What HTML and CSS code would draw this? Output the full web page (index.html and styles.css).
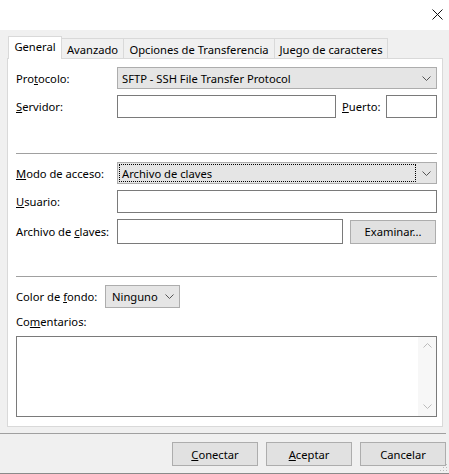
FILE: index.html
```html
<!DOCTYPE html>
<html lang="es">
<head>
<meta charset="utf-8">
<title>Sitio</title>
<link rel="stylesheet" href="styles.css">
</head>
<body>
<div class="window">
  <div class="titlebar">
    <span class="close"><svg width="11" height="11" viewBox="0 0 11 11"><path d="M0.5 0.5 L10.5 10.5 M10.5 0.5 L0.5 10.5" stroke="#111" stroke-width="1" fill="none"/></svg></span>
  </div>
  <div class="tabs">
    <div class="tab tab-general active">General</div>
    <div class="tab tab-avanzado">Avanzado</div>
    <div class="tab tab-opciones">Opciones de Transferencia</div>
    <div class="tab tab-juego">Juego de caracteres</div>
  </div>
  <div class="panel">
    <div class="row row-proto">
      <span class="lbl">Pro<u>t</u>ocolo:</span>
      <div class="combo grow">
        <span class="val">SFTP - SSH File Transfer Protocol</span>
        <svg class="chev" width="9" height="5" viewBox="0 0 9 5"><polyline points="0.5,0.5 4.5,4.5 8.5,0.5" stroke="#555" stroke-width="1" fill="none"/></svg>
      </div>
    </div>
    <div class="row row-server">
      <span class="lbl"><u>S</u>ervidor:</span>
      <div class="input grow"></div>
      <span class="lbl-port"><u>P</u>uerto:</span>
      <div class="input port"></div>
    </div>
    <div class="sep sep-1"></div>
    <div class="row row-modo">
      <span class="lbl"><u>M</u>odo de acceso:</span>
      <div class="combo grow">
        <span class="val focus">Archivo de claves</span>
        <svg class="chev" width="9" height="5" viewBox="0 0 9 5"><polyline points="0.5,0.5 4.5,4.5 8.5,0.5" stroke="#555" stroke-width="1" fill="none"/></svg>
      </div>
    </div>
    <div class="row row-user">
      <span class="lbl"><u>U</u>suario:</span>
      <div class="input grow"></div>
    </div>
    <div class="row row-key">
      <span class="lbl">Archivo de <u>c</u>laves:</span>
      <div class="input grow"></div>
      <div class="btn btn-browse">Examinar...</div>
    </div>
    <div class="sep sep-2"></div>
    <div class="row row-color">
      <span class="lbl lbl-color">Color de <u>f</u>ondo:</span>
      <div class="combo combo-color">
        <span class="val">Ninguno</span>
        <svg class="chev" width="9" height="5" viewBox="0 0 9 5"><polyline points="0.5,0.5 4.5,4.5 8.5,0.5" stroke="#555" stroke-width="1" fill="none"/></svg>
      </div>
    </div>
    <div class="lbl-comments">Co<u>m</u>entarios:</div>
    <div class="textarea">
      <div class="text-body"></div>
      <div class="vscroll">
        <svg width="9" height="5" viewBox="0 0 9 5"><polyline points="0.5,4.5 4.5,0.5 8.5,4.5" stroke="#bbb" stroke-width="1" fill="none"/></svg>
        <svg width="9" height="5" viewBox="0 0 9 5"><polyline points="0.5,0.5 4.5,4.5 8.5,0.5" stroke="#bbb" stroke-width="1" fill="none"/></svg>
      </div>
    </div>
  </div>
  <div class="footer-sep"></div>
  <div class="footer">
    <div class="btn"><u>C</u>onectar</div>
    <div class="btn"><u>A</u>ceptar</div>
    <div class="btn">Cancelar</div>
  </div>
  <svg class="grip" width="8" height="8" viewBox="0 0 8 8">
    <rect x="6" y="0" width="1" height="1" fill="#bbb"/>
    <rect x="3" y="3" width="1" height="1" fill="#bbb"/>
    <rect x="6" y="3" width="1" height="1" fill="#bbb"/>
    <rect x="0" y="6" width="1" height="1" fill="#bbb"/>
    <rect x="3" y="6" width="1" height="1" fill="#bbb"/>
    <rect x="6" y="6" width="1" height="1" fill="#bbb"/>
  </svg>
</div>
</body>
</html>
```

FILE: styles.css
```css
* { box-sizing: border-box; }

html, body {
  margin: 0;
  padding: 0;
}

body {
  font-family: "Noto Sans", "Segoe UI", "Liberation Sans", sans-serif;
  font-size: 11.2px;
  color: #000;
  background: #f0f0f0;
}

u { text-decoration: underline; text-underline-offset: 1px; }

.window {
  position: relative;
  width: 449px;
  height: 474px;
  display: flex;
  flex-direction: column;
  background: #f0f0f0;
  border-bottom: 1px solid #8a8a8a;
}

.titlebar {
  height: 30px;
  background: #fff;
  display: flex;
  justify-content: flex-end;
  align-items: flex-start;
  padding: 9px 6px 0 0;
}

.close { display: block; width: 11px; height: 11px; }
.close svg { display: block; }

/* tabs */
.tabs {
  height: 28px;
  display: flex;
  align-items: flex-end;
  padding-left: 8px;
}

.tab {
  height: 20px;
  border: 1px solid #d9d9d9;
  border-bottom: none;
  margin-left: -1px;
  display: flex;
  align-items: center;
  justify-content: center;
  white-space: nowrap;
  padding-top: 1px;
  background: #f0f0f0;
}

.tab.active {
  position: relative;
  z-index: 1;
  height: 23px;
  margin-bottom: -1px;
  margin-left: 0;
  background: #fff;
  padding-top: 0;
  padding-bottom: 3px;
}

.tab-general { width: 54px; }
.tab-avanzado { width: 63px; }
.tab-opciones { width: 152px; }
.tab-juego { width: 114px; }

/* panel */
.panel {
  margin: 0 6px 0 7px;
  height: 369px;
  background: #fff;
  border: 1px solid #d9d9d9;
  padding: 8px 5px 0 8px;
  display: flex;
  flex-direction: column;
}

.row {
  display: flex;
  align-items: center;
}

.lbl {
  width: 101px;
  flex: none;
  white-space: nowrap;
}

.lbl-color { width: 89px; }

.grow { flex: 1; min-width: 0; }

.combo {
  height: 22px;
  background: #e5e5e5;
  border: 1px solid #adadad;
  display: flex;
  align-items: center;
}

.combo .val {
  flex: 1;
  height: 18px;
  margin: 1px 0 1px 1px;
  padding-left: 2px;
  display: flex;
  align-items: center;
  border: 1px dotted transparent;
  white-space: nowrap;
}

.combo .val.focus { border-color: #000; }

.combo .chev {
  flex: none;
  margin: 0 5px 0 6px;
}

.combo-color {
  width: 75px;
  height: 23px;
}

.combo-color .val { padding-left: 4px; }

.input {
  height: 23px;
  background: #fff;
  border: 1px solid #7a7a7a;
}

.lbl-port {
  width: 44px;
  margin-left: 6px;
  flex: none;
  white-space: nowrap;
}

.input.port { width: 51px; flex: none; }

.row-proto { height: 22px; }
.row-server { margin-top: 6px; }
.sep {
  height: 1px;
  background: #a0a0a0;
}
.sep-1 { margin-top: 35px; }
.row-modo { margin-top: 8px; }
.row-user { margin-top: 6px; }
.row-key { margin-top: 6px; }
.row-key .input { height: 25px; }

.btn {
  height: 24px;
  width: 86px;
  flex: none;
  background: #e1e1e1;
  border: 1px solid #adadad;
  display: flex;
  align-items: center;
  justify-content: center;
  white-space: nowrap;
}

.btn-browse { margin-left: 7px; margin-right: 1px; }

.sep-2 { margin-top: 32px; }
.row-color { margin-top: 8px; }

.lbl-comments {
  margin-top: 6px;
  height: 16px;
  line-height: 16px;
}

.textarea {
  margin-top: 6px;
  height: 81px;
  border: 1px solid #7a7a7a;
  background: #fff;
  display: flex;
}

.text-body { flex: 1; }

.vscroll {
  width: 18px;
  background: #f7f7f7;
  display: flex;
  flex-direction: column;
  justify-content: space-between;
  align-items: center;
  padding: 6px 0 7px;
}
.vscroll svg { display: block; }

/* footer */
.footer-sep {
  margin-top: 6px;
  height: 1px;
  background: #a0a0a0;
  margin-right: 3px;
}

.footer {
  margin-top: 8px;
  display: flex;
  justify-content: flex-end;
  gap: 8px;
  padding-right: 3px;
}

.grip {
  position: absolute;
  right: 1px;
  bottom: 1px;
}
```
